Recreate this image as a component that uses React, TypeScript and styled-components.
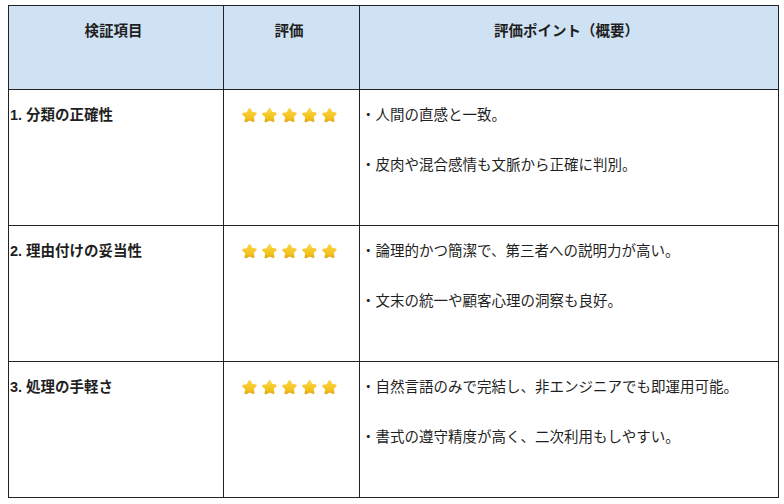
import styled, { createGlobalStyle } from 'styled-components';

const GlobalStyle = createGlobalStyle`
  html, body {
    margin: 0;
    padding: 0;
    background: #fff;
  }
  body {
    font-family: "Liberation Sans", "Noto Sans CJK JP", sans-serif;
    color: #1f1f1f;
  }
`;

const Page = styled.div`
  padding: 5px 6px 7px 8px;
`;

const Table = styled.table`
  width: 770px;
  border-collapse: collapse;
  table-layout: fixed;
`;

const HeadCell = styled.th`
  box-sizing: border-box;
  height: 84px;
  padding: 15px 6px 0 1px;
  vertical-align: top;
  text-align: center;
  background: #cfe2f3;
  border: 1px solid #222;
  font-size: 14.5px;
  line-height: 21px;
  font-weight: 700;
`;

const Cell = styled.td<{ $center?: boolean; $bold?: boolean }>`
  box-sizing: border-box;
  height: 136px;
  padding: 15px 6px 0 1px;
  vertical-align: top;
  text-align: ${p => (p.$center ? 'center' : 'left')};
  border: 1px solid #222;
  font-size: 14.5px;
  line-height: 21px;
  font-weight: ${p => (p.$bold ? 700 : 400)};
`;

const Stars = styled.div`
  display: flex;
  justify-content: center;
  gap: 3px;
  padding-top: 2px;
`;

const Points = styled.div`
  display: flex;
  flex-direction: column;
  gap: 29px;
`;

const StarIcon = () => (
  <svg width="17" height="16" viewBox="0 0 24 23">
    <defs>
      <linearGradient id="starFill" x1="0" y1="0" x2="0" y2="1">
        <stop offset="0" stopColor="#fbd54a" />
        <stop offset="0.7" stopColor="#f4c21c" />
        <stop offset="1" stopColor="#e0a010" />
      </linearGradient>
    </defs>
    <path
      d="M12 1.2c.6 0 1.1.3 1.4.9l2.4 4.9 5.3.8c1.3.2 1.8 1.8.9 2.7l-3.9 3.8.9 5.4c.2 1.3-1.1 2.2-2.3 1.6L12 19.3l-4.8 2.5c-1.2.6-2.5-.3-2.3-1.6l.9-5.4-3.9-3.8c-.9-.9-.4-2.5.9-2.7l5.3-.8 2.4-4.9c.3-.6.9-.9 1.5-.9z"
      fill="url(#starFill)"
    />
  </svg>
);

const rows = [
  {
    item: '1. 分類の正確性',
    points: ['・人間の直感と一致。', '・皮肉や混合感情も文脈から正確に判別。'],
  },
  {
    item: '2. 理由付けの妥当性',
    points: ['・論理的かつ簡潔で、第三者への説明力が高い。', '・文末の統一や顧客心理の洞察も良好。'],
  },
  {
    item: '3. 処理の手軽さ',
    points: ['・自然言語のみで完結し、非エンジニアでも即運用可能。', '・書式の遵守精度が高く、二次利用もしやすい。'],
  },
];

export default function App() {
  return (
    <Page>
      <GlobalStyle />
      <Table>
        <colgroup>
          <col style={{ width: 215 }} />
          <col style={{ width: 136 }} />
          <col style={{ width: 419 }} />
        </colgroup>
        <thead>
          <tr>
            <HeadCell>検証項目</HeadCell>
            <HeadCell>評価</HeadCell>
            <HeadCell>評価ポイント（概要）</HeadCell>
          </tr>
        </thead>
        <tbody>
          {rows.map(r => (
            <tr key={r.item}>
              <Cell $bold>{r.item}</Cell>
              <Cell $center>
                <Stars>
                  {[0, 1, 2, 3, 4].map(i => (
                    <StarIcon key={i} />
                  ))}
                </Stars>
              </Cell>
              <Cell>
                <Points>
                  {r.points.map(p => (
                    <div key={p}>{p}</div>
                  ))}
                </Points>
              </Cell>
            </tr>
          ))}
        </tbody>
      </Table>
    </Page>
  );
}
